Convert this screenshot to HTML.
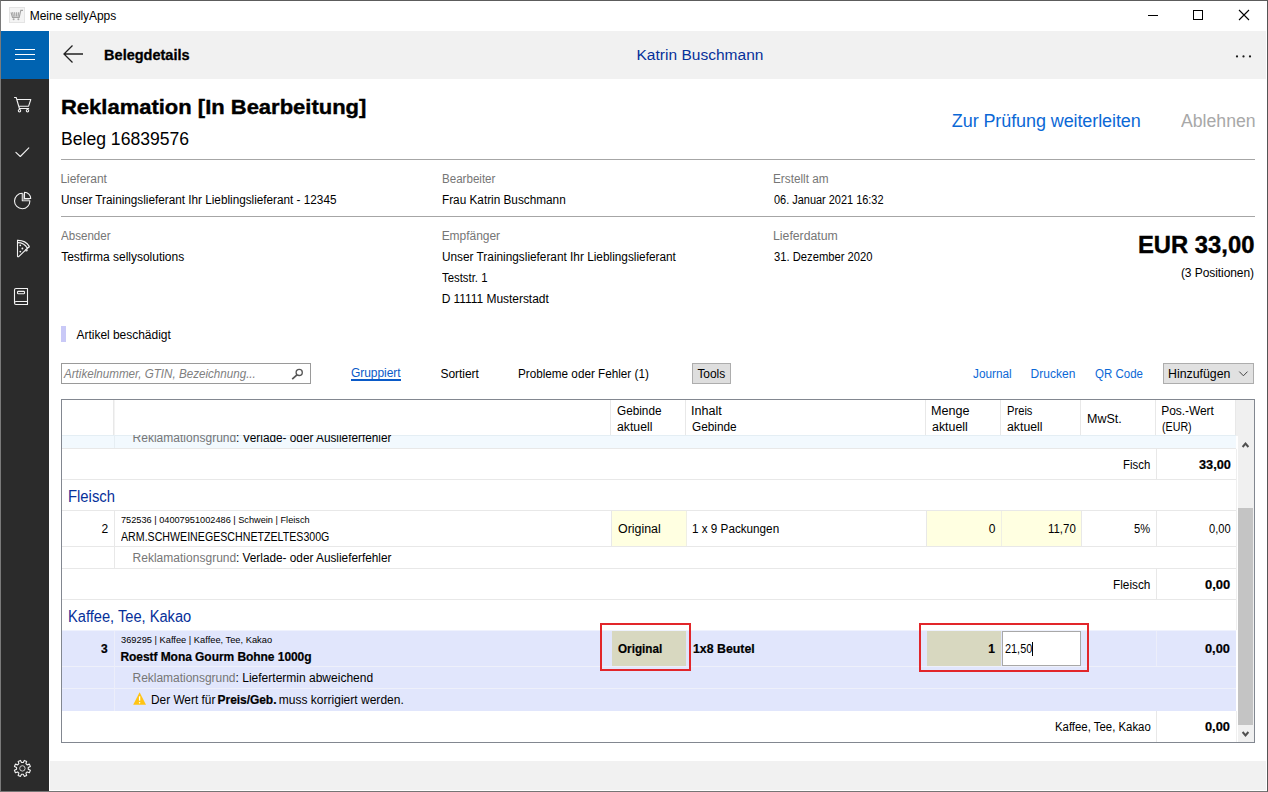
<!DOCTYPE html>
<html lang="de">
<head>
<meta charset="utf-8">
<title>Meine sellyApps</title>
<style>
html,body{margin:0;padding:0;}
body{width:1268px;height:792px;overflow:hidden;background:#fff;position:relative;font-family:"Liberation Sans",sans-serif;color:#000;}
.a{position:absolute;}
.t{position:absolute;white-space:pre;line-height:20px;height:20px;font-size:12px;transform-origin:0 0;}
.hl{position:absolute;height:1px;background:#e8e8e8;}
.vl{position:absolute;width:1px;background:#e8e8e8;}
svg{position:absolute;overflow:visible;}
</style>
</head>
<body>
<!-- window frame -->
<div class="a" style="left:0;top:0;width:1268px;height:792px;box-sizing:border-box;border:1px solid #555;border-top-color:#5c5c5c;border-left-color:#7a7a7a;border-bottom-color:#757575;"></div>
<!-- title bar -->
<div class="a" id="titlebar" style="left:1px;top:1px;width:1266px;height:30px;background:#fff;"></div>
<div class="a" style="left:9px;top:7px;width:16px;height:16px;background:#f4f4f4;box-shadow:inset 0 0 0 1px #e4e4e4;"></div>
<svg style="left:9px;top:7px" width="16" height="16" viewBox="0 0 16 16"><path d="M2 5.4L3.5 10.4H10.2L11.8 3.4H14" fill="none" stroke="#a2a2a2" stroke-width="1.1"/><path d="M3.6 5.2L4.4 9.6 M5.6 5.2L5.9 9.6 M7.6 5.2L7.5 9.6 M9.6 5.2L9.1 9.6" fill="none" stroke="#a8a8a8" stroke-width="1.2"/><circle cx="4.6" cy="12.3" r="1" fill="#a8a8a8"/><circle cx="9.4" cy="12.3" r="1" fill="#a8a8a8"/></svg>
<!-- window controls -->
<div class="a" style="left:1148px;top:15px;width:10px;height:1px;background:#000;"></div>
<div class="a" style="left:1193px;top:10px;width:10px;height:10px;box-sizing:border-box;border:1px solid #000;"></div>
<svg style="left:1239px;top:10px" width="10" height="10" viewBox="0 0 10 10"><path d="M0 0L10 10M10 0L0 10" stroke="#000" stroke-width="1.1" fill="none"/></svg>
<!-- header bar -->
<div class="a" id="header" style="left:50px;top:31px;width:1216px;height:48px;background:#f1f1f1;"></div>
<!-- hamburger -->
<div class="a" id="burger" style="left:1px;top:31px;width:48px;height:48px;background:#0063b1;"></div>
<div class="a" style="left:15px;top:49px;width:20px;height:1px;background:#fff;"></div>
<div class="a" style="left:15px;top:54px;width:20px;height:1px;background:#fff;"></div>
<div class="a" style="left:15px;top:59px;width:20px;height:1px;background:#fff;"></div>
<!-- back arrow -->
<svg style="left:63px;top:45px" width="20" height="18" viewBox="0 0 20 18"><path d="M20 9H1M9.5 0.5L1 9L9.5 17.5" fill="none" stroke="#222" stroke-width="1.3"/></svg>
<!-- more dots -->
<svg style="left:1230px;top:50px" width="26" height="12" viewBox="0 0 26 12"><circle cx="7" cy="6.4" r="1.1" fill="#1a1a1a"/><circle cx="13.5" cy="6.4" r="1.1" fill="#1a1a1a"/><circle cx="20" cy="6.4" r="1.1" fill="#1a1a1a"/></svg>
<!-- sidebar -->
<div class="a" id="sidebar" style="left:1px;top:79px;width:48px;height:712px;background:#2b2b2b;"></div>
<svg style="left:0;top:0" width="49" height="792" viewBox="0 0 49 792">
<!-- cart -->
<path d="M14.5 97.5H16.2L19.4 108.5H28.7 M16.9 99.5H30.8L28.6 106.2H18.9" fill="none" stroke="#f2f2f2" stroke-width="1.1" stroke-linejoin="round" stroke-linecap="round"/>
<circle cx="19.5" cy="110.7" r="1.2" fill="none" stroke="#f2f2f2" stroke-width="1.1" stroke-linejoin="round" stroke-linecap="round"/><circle cx="27.5" cy="110.7" r="1.2" fill="none" stroke="#f2f2f2" stroke-width="1.1" stroke-linejoin="round" stroke-linecap="round"/>
<!-- check -->
<path d="M15.9 104.6L20.3 108.8L28.8 100.2" transform="translate(0,47.7)" fill="none" stroke="#f2f2f2" stroke-width="1.1" stroke-linejoin="round" stroke-linecap="round"/>
<!-- pie -->
<path d="M22.3 193.3A7.7 7.7 0 1 0 29.9 200.8H22.3Z" fill="none" stroke="#f2f2f2" stroke-width="1.1" stroke-linejoin="round" stroke-linecap="round"/>
<path d="M23.4 193.4V199.6H29.6" fill="none" stroke="#8c8c8c" stroke-width="1.2"/>
<path d="M24.5 192.3V198.5H30.7A6.2 6.2 0 0 0 24.5 192.3Z" fill="none" stroke="#f2f2f2" stroke-width="1.1" stroke-linejoin="round" stroke-linecap="round"/>
<!-- pizza -->
<path d="M17.5 240.4V256.2Q17.7 257.3 18.7 256.6L28.6 247.2" fill="none" stroke="#f2f2f2" stroke-width="1.1" stroke-linejoin="round" stroke-linecap="round"/>
<path d="M17.5 240.4Q25.5 240.2 29.3 246.4Q29.2 247.6 28.2 247.6 M17.6 242.6Q24.2 242.6 27.4 248.2" fill="none" stroke="#f2f2f2" stroke-width="1.1" stroke-linejoin="round" stroke-linecap="round"/>
<circle cx="20.3" cy="245.3" r="0.9" fill="#f2f2f2"/><circle cx="22.4" cy="248.5" r="0.9" fill="#f2f2f2"/><circle cx="20.3" cy="251.6" r="0.9" fill="#f2f2f2"/><circle cx="26.3" cy="250.2" r="1.35" fill="#dcdcdc"/>
<!-- book -->
<path d="M16 288.5H27.5V304.5H16Q14.5 304.5 14.5 303V290Q14.5 288.5 16 288.5Z M14.5 303Q14.5 301.5 16 301.5H27.5" fill="none" stroke="#f2f2f2" stroke-width="1.1" stroke-linejoin="round" stroke-linecap="round"/>
<rect x="17.5" y="291.4" width="7" height="2.4" rx="0.8" fill="none" stroke="#f2f2f2" stroke-width="1.1" stroke-linejoin="round" stroke-linecap="round"/>
<!-- gear -->
<path d="M23.27 762.56 L24.31 760.43 L26.68 761.41 L25.91 763.66 L27.14 764.89 L29.39 764.12 L30.37 766.49 L28.24 767.53 L28.24 769.27 L30.37 770.31 L29.39 772.68 L27.14 771.91 L25.91 773.14 L26.68 775.39 L24.31 776.37 L23.27 774.24 L21.53 774.24 L20.49 776.37 L18.12 775.39 L18.89 773.14 L17.66 771.91 L15.41 772.68 L14.43 770.31 L16.56 769.27 L16.56 767.53 L14.43 766.49 L15.41 764.12 L17.66 764.89 L18.89 763.66 L18.12 761.41 L20.49 760.43 L21.53 762.56Z" fill="none" stroke="#f2f2f2" stroke-width="1.1" stroke-linejoin="round" stroke-linecap="round"/>
<circle cx="22.4" cy="768.4" r="2.7" fill="none" stroke="#d0d0d0" stroke-width="1"/>
</svg>
<!-- footer -->
<div class="a" id="footer" style="left:50px;top:761px;width:1216px;height:29px;background:#f1f1f1;"></div>
<!-- separators -->
<div class="a" style="left:61px;top:159px;width:1194px;height:1px;background:#a6a6a6;"></div>
<div class="a" style="left:61px;top:216px;width:1194px;height:1px;background:#a6a6a6;"></div>
<!-- reason marker -->
<div class="a" style="left:61px;top:326px;width:5px;height:16px;background:#c9c9f7;"></div>
<!-- search box -->
<div class="a" style="left:61px;top:363px;width:250px;height:21px;box-sizing:border-box;border:1px solid #9a9a9a;background:#fff;"></div>
<svg style="left:291px;top:368px" width="13" height="12" viewBox="0 0 13 12"><circle cx="8.2" cy="4.4" r="3.1" fill="none" stroke="#555" stroke-width="1.3"/><path d="M6 6.8L1.2 11.2" stroke="#555" stroke-width="1.7" fill="none"/></svg>
<!-- tab underline -->
<div class="a" style="left:351px;top:379px;width:50px;height:2px;background:#0a5ac8;"></div>
<!-- buttons -->
<div class="a" style="left:692px;top:363px;width:39px;height:21px;box-sizing:border-box;border:1px solid #adadad;background:#dedede;"></div>
<div class="a" style="left:1163px;top:363px;width:91px;height:21px;box-sizing:border-box;border:1px solid #adadad;background:#e1e1e1;"></div>
<svg style="left:1239px;top:371px" width="9" height="6" viewBox="0 0 9 6"><path d="M0.3 0.6L4.4 4.8L8.5 0.6" fill="none" stroke="#444" stroke-width="1"/></svg>

<!-- table -->
<div class="a" id="grid" style="left:61px;top:399px;width:1194px;height:344px;box-sizing:border-box;border:1px solid #828790;background:#fff;"></div>
<!-- header right filler + scrollbar -->
<div class="a" style="left:1236px;top:400px;width:18px;height:36px;background:#f0f0f0;"></div>
<div class="a" style="left:1238px;top:436px;width:16px;height:306px;background:#f0f0f0;"></div>
<div class="a" style="left:1238px;top:508px;width:15px;height:217px;background:#c4c4c4;"></div>
<svg style="left:1241px;top:441px" width="9" height="8" viewBox="0 0 9 8"><path d="M1.6 6L4.5 2.6L7.4 6" fill="none" stroke="#505050" stroke-width="2"/></svg>
<svg style="left:1241px;top:730px" width="9" height="8" viewBox="0 0 9 8"><path d="M1.6 2L4.5 5.4L7.4 2" fill="none" stroke="#505050" stroke-width="2"/></svg>
<!-- header column separators -->
<div class="vl" style="left:113px;top:400px;height:35px;"></div><div class="vl" style="left:114px;top:400px;height:35px;background:#f3f3f3;"></div>
<div class="vl" style="left:610px;top:400px;height:35px;"></div>
<div class="vl" style="left:685px;top:400px;height:35px;"></div>
<div class="vl" style="left:925px;top:400px;height:35px;"></div>
<div class="vl" style="left:1000px;top:400px;height:35px;"></div>
<div class="vl" style="left:1080px;top:400px;height:35px;"></div>
<div class="vl" style="left:1155px;top:400px;height:35px;"></div>
<div class="vl" style="left:1235px;top:400px;height:35px;"></div>
<!-- clipped row -->
<div class="a" style="left:62px;top:435px;width:1174px;height:13px;background:#f2f9fe;"></div>
<div class="hl" style="left:62px;top:435px;width:1174px;background:#e4eef4;"></div>
<div class="vl" style="left:114px;top:436px;height:12px;background:#e6eef3;"></div>
<div class="hl" style="left:62px;top:448px;width:1174px;"></div>
<!-- Fisch sum row -->
<div class="vl" style="left:1156px;top:449px;height:30px;"></div>
<div class="hl" style="left:62px;top:479px;width:1174px;"></div>
<!-- Fleisch group -->
<div class="hl" style="left:62px;top:510px;width:1174px;"></div>
<!-- row 2 -->
<div class="a" style="left:612px;top:511px;width:74px;height:35px;background:#ffffe1;"></div>
<div class="a" style="left:927px;top:511px;width:154px;height:35px;background:#ffffe1;"></div>
<div class="vl" style="left:114px;top:511px;height:57px;"></div>
<div class="vl" style="left:611px;top:511px;height:35px;"></div>
<div class="vl" style="left:686px;top:511px;height:35px;background:#efefe4;"></div>
<div class="vl" style="left:926px;top:511px;height:35px;"></div>
<div class="vl" style="left:1001px;top:511px;height:35px;background:#efefe4;"></div>
<div class="vl" style="left:1081px;top:511px;height:35px;"></div>
<div class="vl" style="left:1156px;top:511px;height:35px;"></div>
<div class="hl" style="left:62px;top:546px;width:1174px;"></div>
<div class="hl" style="left:62px;top:568px;width:1174px;"></div>
<!-- Fleisch sum -->
<div class="vl" style="left:1156px;top:569px;height:30px;"></div>
<div class="hl" style="left:62px;top:599px;width:1174px;"></div>
<!-- row 3 highlighted -->
<div class="a" style="left:62px;top:630px;width:1174px;height:1px;background:#eff2fd;"></div>
<div class="a" style="left:62px;top:631px;width:1174px;height:80px;background:#e1e6fc;"></div>
<div class="hl" style="left:62px;top:666px;width:1174px;background:#eef0fa;"></div>
<div class="hl" style="left:62px;top:688px;width:1174px;background:#eef0fa;"></div>
<div class="vl" style="left:114px;top:631px;height:80px;background:#eceefa;"></div>
<div class="vl" style="left:1156px;top:631px;height:35px;background:#eceefa;"></div>
<div class="a" style="left:612px;top:631px;width:74px;height:35px;background:#d8d8c0;"></div>
<div class="a" style="left:927px;top:631px;width:74px;height:35px;background:#d8d8c0;"></div>
<div class="a" style="left:1002px;top:631px;width:79px;height:35px;box-sizing:border-box;border:1px solid #a8a8a8;background:#fff;"></div>
<div class="a" style="left:1032px;top:642px;width:1px;height:14px;background:#000;"></div>
<div class="a" style="left:600px;top:623px;width:91px;height:48px;box-sizing:border-box;border:2px solid #e2262a;"></div>
<div class="a" style="left:919px;top:623px;width:170px;height:49px;box-sizing:border-box;border:2px solid #e2262a;"></div>
<!-- warning icon -->
<svg style="left:133px;top:692px" width="13.2" height="13" viewBox="0 0 13 12" preserveAspectRatio="none"><path d="M6.5 0.3L12.8 11.7H0.2Z" fill="#ffc414"/><path d="M6.5 4V8" stroke="#fff" stroke-width="1.3"/><circle cx="6.5" cy="9.9" r="0.75" fill="#fff"/></svg>
<div class="vl" style="left:1236px;top:449px;height:181px;background:#efefef;"></div>
<div class="vl" style="left:1236px;top:711px;height:31px;background:#efefef;"></div>
<!-- Kaffee sum -->
<div class="vl" style="left:1156px;top:711px;height:31px;"></div>

<!-- text -->
<div class="t" style="left:29.75px;top:5.80px;letter-spacing:-0.066px;">Meine sellyApps</div>
<div class="t" style="left:104.09px;top:44.60px;font-size:14.5px;font-weight:700;-webkit-text-stroke:0.3px;letter-spacing:0.007px;">Belegdetails</div>
<div class="t" style="left:636.49px;top:44.90px;font-size:15.5px;color:#06309a;letter-spacing:0.022px;">Katrin Buschmann</div>
<div class="t" style="left:60.63px;top:97.00px;font-size:21px;font-weight:700;-webkit-text-stroke:0.4px;transform:scaleX(1.0467);">Reklamation [In Bearbeitung]</div>
<div class="t" style="left:60.63px;top:129.00px;font-size:18px;transform:scaleX(0.9768);">Beleg 16839576</div>
<div class="t" style="left:951.84px;top:110.80px;font-size:18px;color:#0b68d6;letter-spacing:-0.096px;">Zur Prüfung weiterleiten</div>
<div class="t" style="left:1180.60px;top:110.80px;font-size:18px;color:#a8a8a8;transform:scaleX(0.9819);">Ablehnen</div>
<div class="t" style="left:60.45px;top:168.70px;color:#767676;letter-spacing:-0.033px;">Lieferant</div>
<div class="t" style="left:60.52px;top:190.10px;transform:scaleX(0.9785);">Unser Trainingslieferant Ihr Lieblingslieferant - 12345</div>
<div class="t" style="left:441.68px;top:168.70px;color:#767676;transform:scaleX(0.9646);">Bearbeiter</div>
<div class="t" style="left:441.67px;top:190.10px;transform:scaleX(0.9812);">Frau Katrin Buschmann</div>
<div class="t" style="left:773.47px;top:168.70px;color:#767676;transform:scaleX(0.9821);">Erstellt am</div>
<div class="t" style="left:773.99px;top:190.10px;transform:scaleX(0.9120);">06. Januar 2021 16:32</div>
<div class="t" style="left:61.40px;top:226.00px;color:#767676;transform:scaleX(0.9654);">Absender</div>
<div class="t" style="left:61.15px;top:247.00px;letter-spacing:-0.014px;">Testfirma sellysolutions</div>
<div class="t" style="left:441.65px;top:226.00px;color:#767676;letter-spacing:-0.032px;">Empfänger</div>
<div class="t" style="left:441.71px;top:247.00px;transform:scaleX(0.9848);">Unser Trainingslieferant Ihr Lieblingslieferant</div>
<div class="t" style="left:442.36px;top:268.00px;transform:scaleX(0.9472);">Teststr. 1</div>
<div class="t" style="left:441.65px;top:289.00px;letter-spacing:-0.039px;">D 11111 Musterstadt</div>
<div class="t" style="left:773.43px;top:226.00px;color:#767676;transform:scaleX(1.0231);">Lieferdatum</div>
<div class="t" style="left:773.98px;top:247.00px;transform:scaleX(0.9347);">31. Dezember 2020</div>
<div class="t" style="left:1138.01px;top:234.60px;font-size:23.5px;font-weight:700;-webkit-text-stroke:0.4px;transform:scaleX(1.0122);">EUR 33,00</div>
<div class="t" style="left:1180.90px;top:263.00px;letter-spacing:-0.065px;">(3 Positionen)</div>
<div class="t" style="left:76.50px;top:324.70px;letter-spacing:-0.025px;">Artikel beschädigt</div>
<div class="t" style="left:64.48px;top:363.70px;font-style:italic;color:#808080;transform:scaleX(0.9684);">Artikelnummer, GTIN, Bezeichnung...</div>
<div class="t" style="left:350.90px;top:362.80px;color:#0a5ac8;letter-spacing:-0.030px;">Gruppiert</div>
<div class="t" style="left:440.50px;top:363.80px;letter-spacing:-0.056px;">Sortiert</div>
<div class="t" style="left:518.17px;top:363.80px;transform:scaleX(0.9758);">Probleme oder Fehler (1)</div>
<div class="t" style="left:697.45px;top:363.60px;letter-spacing:-0.066px;">Tools</div>
<div class="t" style="left:972.95px;top:364.00px;color:#0b68d6;transform:scaleX(0.9833);">Journal</div>
<div class="t" style="left:1030.55px;top:364.00px;color:#0b68d6;letter-spacing:0.040px;">Drucken</div>
<div class="t" style="left:1094.97px;top:364.00px;color:#0b68d6;transform:scaleX(0.9582);">QR Code</div>
<div class="t" style="left:1167.52px;top:364.00px;transform:scaleX(1.0291);">Hinzufügen</div>
<div class="t" style="left:617.11px;top:401.10px;transform:scaleX(0.9809);">Gebinde</div>
<div class="t" style="left:617.19px;top:416.90px;transform:scaleX(1.0203);">aktuell</div>
<div class="t" style="left:691.35px;top:401.10px;transform:scaleX(1.0472);">Inhalt</div>
<div class="t" style="left:691.91px;top:416.90px;transform:scaleX(0.9832);">Gebinde</div>
<div class="t" style="left:931.30px;top:401.10px;transform:scaleX(1.0506);">Menge</div>
<div class="t" style="left:931.78px;top:416.90px;transform:scaleX(1.0323);">aktuell</div>
<div class="t" style="left:1006.82px;top:401.10px;transform:scaleX(0.9311);">Preis</div>
<div class="t" style="left:1007.19px;top:416.90px;transform:scaleX(1.0233);">aktuell</div>
<div class="t" style="left:1086.61px;top:408.80px;transform:scaleX(1.0415);">MwSt.</div>
<div class="t" style="left:1161.25px;top:401.10px;letter-spacing:-0.073px;">Pos.-Wert</div>
<div class="t" style="left:1161.58px;top:416.90px;transform:scaleX(0.8894);">(EUR)</div>
<div class="t" style="left:132.55px;top:427.70px;color:#767676;letter-spacing:0.018px;clip-path:inset(7.30px 0 0 0);">Reklamationsgrund</div>
<div class="t" style="left:236.17px;top:427.70px;transform:scaleX(0.9834);clip-path:inset(7.30px 0 0 0);">: Verlade- oder Auslieferfehler</div>
<div class="t" style="left:1122.90px;top:454.80px;transform:scaleX(0.9500);">Fisch</div>
<div class="t" style="left:1198.73px;top:454.80px;font-weight:700;-webkit-text-stroke:0.2px;transform:scaleX(1.0612);">33,00</div>
<div class="t" style="left:67.74px;top:487.00px;font-size:16px;color:#06309a;transform:scaleX(0.9272);">Fleisch</div>
<div class="t" style="left:101.60px;top:519.00px;">2</div>
<div class="t" style="left:120.96px;top:510.20px;font-size:9.5px;transform:scaleX(0.9676);">752536 | 04007951002486 | Schwein | Fleisch</div>
<div class="t" style="left:121.10px;top:526.60px;transform:scaleX(0.8862);">ARM.SCHWEINEGESCHNETZELTES300G</div>
<div class="t" style="left:132.55px;top:548.00px;color:#767676;letter-spacing:0.018px;">Reklamationsgrund</div>
<div class="t" style="left:236.17px;top:548.00px;transform:scaleX(0.9834);">: Verlade- oder Auslieferfehler</div>
<div class="t" style="left:617.63px;top:518.80px;transform:scaleX(1.0316);">Original</div>
<div class="t" style="left:692.22px;top:518.80px;transform:scaleX(0.9747);">1 x 9 Packungen</div>
<div class="t" style="left:988.85px;top:518.80px;">0</div>
<div class="t" style="left:1047.74px;top:518.80px;transform:scaleX(0.9527);">11,70</div>
<div class="t" style="left:1134.48px;top:518.80px;transform:scaleX(0.9287);">5%</div>
<div class="t" style="left:1208.88px;top:518.80px;transform:scaleX(0.9252);">0,00</div>
<div class="t" style="left:1113.07px;top:574.50px;transform:scaleX(0.9839);">Fleisch</div>
<div class="t" style="left:1205.41px;top:574.50px;font-weight:700;-webkit-text-stroke:0.2px;transform:scaleX(1.0788);">0,00</div>
<div class="t" style="left:67.76px;top:606.50px;font-size:16px;color:#06309a;transform:scaleX(0.9149);">Kaffee, Tee, Kakao</div>
<div class="t" style="left:100.95px;top:639.00px;font-weight:700;-webkit-text-stroke:0.2px;">3</div>
<div class="t" style="left:121.06px;top:630.00px;font-size:9.5px;transform:scaleX(0.9782);">369295 | Kaffee | Kaffee, Tee, Kakao</div>
<div class="t" style="left:120.40px;top:647.00px;font-weight:700;-webkit-text-stroke:0.2px;letter-spacing:-0.054px;">Roestf Mona Gourm Bohne 1000g</div>
<div class="t" style="left:132.55px;top:667.60px;color:#767676;letter-spacing:-0.026px;">Reklamationsgrund</div>
<div class="t" style="left:235.55px;top:667.60px;letter-spacing:0.007px;">: Liefertermin abweichend</div>
<div class="t" style="left:150.56px;top:689.60px;transform:scaleX(0.9879);">Der Wert für</div>
<div class="t" style="left:217.60px;top:689.60px;font-weight:700;-webkit-text-stroke:0.2px;letter-spacing:-0.053px;">Preis/Geb.</div>
<div class="t" style="left:278.75px;top:689.60px;letter-spacing:0.015px;">muss korrigiert werden.</div>
<div class="t" style="left:617.86px;top:638.70px;font-weight:700;-webkit-text-stroke:0.2px;transform:scaleX(0.9738);">Original</div>
<div class="t" style="left:693.23px;top:638.70px;font-weight:700;-webkit-text-stroke:0.2px;transform:scaleX(1.0283);">1x8 Beutel</div>
<div class="t" style="left:988.25px;top:638.60px;font-weight:700;-webkit-text-stroke:0.2px;">1</div>
<div class="t" style="left:1004.56px;top:638.60px;transform:scaleX(0.9067);">21,50</div>
<div class="t" style="left:1205.42px;top:638.60px;font-weight:700;-webkit-text-stroke:0.2px;transform:scaleX(1.0655);">0,00</div>
<div class="t" style="left:1054.50px;top:716.80px;transform:scaleX(0.9483);">Kaffee, Tee, Kakao</div>
<div class="t" style="left:1205.42px;top:716.80px;font-weight:700;-webkit-text-stroke:0.2px;transform:scaleX(1.0655);">0,00</div>
</body>
</html>
